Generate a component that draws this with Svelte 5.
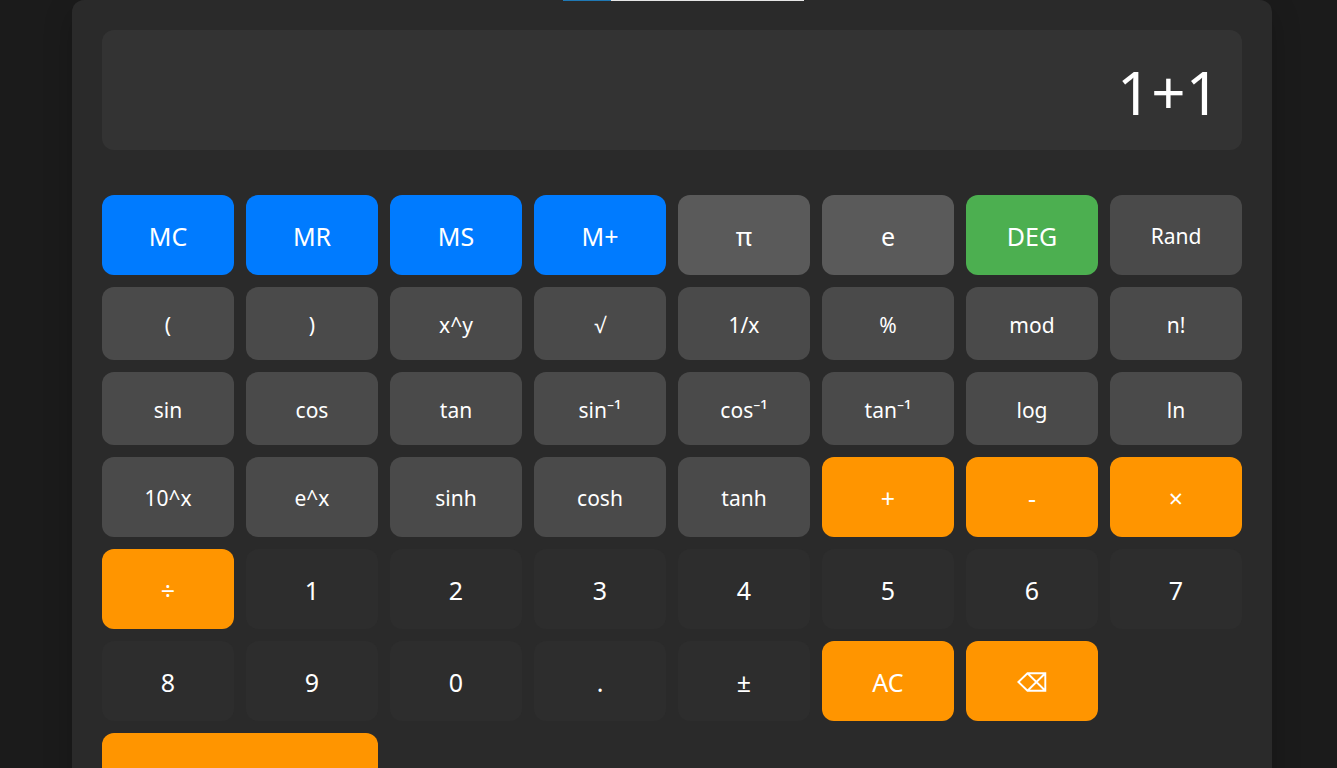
<script>
  const keys = [
    ['MC', 'memory'], ['MR', 'memory'], ['MS', 'memory'], ['M+', 'memory'],
    ['π', 'constant'], ['e', 'constant'], ['DEG', 'mode'], ['Rand', 'fn'],
    ['(', 'fn'], [')', 'fn'], ['x^y', 'fn'], ['√', 'fn'],
    ['1/x', 'fn'], ['%', 'fn'], ['mod', 'fn'], ['n!', 'fn'],
    ['sin', 'fn'], ['cos', 'fn'], ['tan', 'fn'], ['sin⁻¹', 'fn'],
    ['cos⁻¹', 'fn'], ['tan⁻¹', 'fn'], ['log', 'fn'], ['ln', 'fn'],
    ['10^x', 'fn'], ['e^x', 'fn'], ['sinh', 'fn'], ['cosh', 'fn'],
    ['tanh', 'fn'], ['+', 'op'], ['-', 'op'], ['×', 'op'],
    ['÷', 'op'], ['1', 'num'], ['2', 'num'], ['3', 'num'],
    ['4', 'num'], ['5', 'num'], ['6', 'num'], ['7', 'num'],
    ['8', 'num'], ['9', 'num'], ['0', 'num'], ['.', 'num'],
    ['±', 'num'], ['AC', 'op'], ['⌫', 'op']
  ];
  let expression = $state('1+1');

  function press(label) {
    if (label === 'AC') expression = '';
    else if (label === '⌫') expression = expression.slice(0, -1);
    else expression += label;
  }
</script>

<main class="calculator">
  <div class="progress"></div>
  <input class="display" aria-label="Expression" readonly value={expression} />
  <div class="keypad">
    {#each keys as [label, kind]}
      <button class="key {kind}" onclick={() => press(label)}>
        {#if label === '⌫'}
          <svg viewBox="0 0 30 20" width="30" height="20" role="img" aria-label="Backspace">
            <path d="M1.4 10 10.5 1.3H28.3V18.7H10.5ZM10.5 1.3l17.8 17.4M28.3 1.3 10.5 18.7" fill="none" stroke="currentColor" stroke-width="1.9" />
          </svg>
        {:else}{label}{/if}
      </button>
    {/each}
    <button class="key op equals" aria-label="Equals"></button>
  </div>
</main>

<style>
  :global(body) {
    box-sizing: border-box;
    height: 100vh;
    padding-left: 7px;
    overflow: hidden;
    background: #1b1b1b;
  }
  .calculator {
    box-sizing: border-box;
    position: relative;
    width: calc(100% - 64px);
    max-width: 1200px;
    margin: 0 auto;
    padding: 30px;
    border-radius: 12px;
    background: #2a2a2a;
    box-shadow: 0 10px 30px rgba(0, 0, 0, 0.2);
    color: #fff;
    font-family: 'Segoe UI', 'Noto Sans', 'Open Sans', sans-serif;
  }
  .progress {
    position: absolute;
    top: 0;
    left: 491px;
    width: 241px;
    height: 1px;
    background: linear-gradient(to right, #1f78b4 20%, #e6e6e6 20%);
  }
  .display {
    display: block;
    box-sizing: border-box;
    width: 100%;
    height: 120px;
    margin: 0 0 45px;
    padding: 4px 22px 0;
    border: 0;
    border-radius: 12px;
    background: #333;
    color: inherit;
    font: 60px 'Segoe UI', 'Noto Sans', sans-serif;
    text-align: right;
    outline: 0;
  }
  .keypad {
    display: grid;
    grid-template-columns: repeat(8, minmax(0, 1fr));
    grid-template-rows: 80px 73px 73px 80px 80px 80px 80px;
    gap: 12px;
  }
  .key {
    display: flex;
    align-items: center;
    justify-content: center;
    padding: 2px 0 0;
    border: 0;
    border-radius: 12px;
    color: #fff;
    font-family: inherit;
    font-size: 25px;
    line-height: 34px;
    cursor: pointer;
  }
  .memory { background: #007bff; }
  .constant { background: #5a5a5a; }
  .mode { background: #4caf50; }
  .fn {
    background: #4a4a4a;
    font-size: 21px;
  }
  .op { background: #ff9500; }
  .num { background: #2d2d2d; }
  .equals { grid-column: 1 / span 2; }
</style>
